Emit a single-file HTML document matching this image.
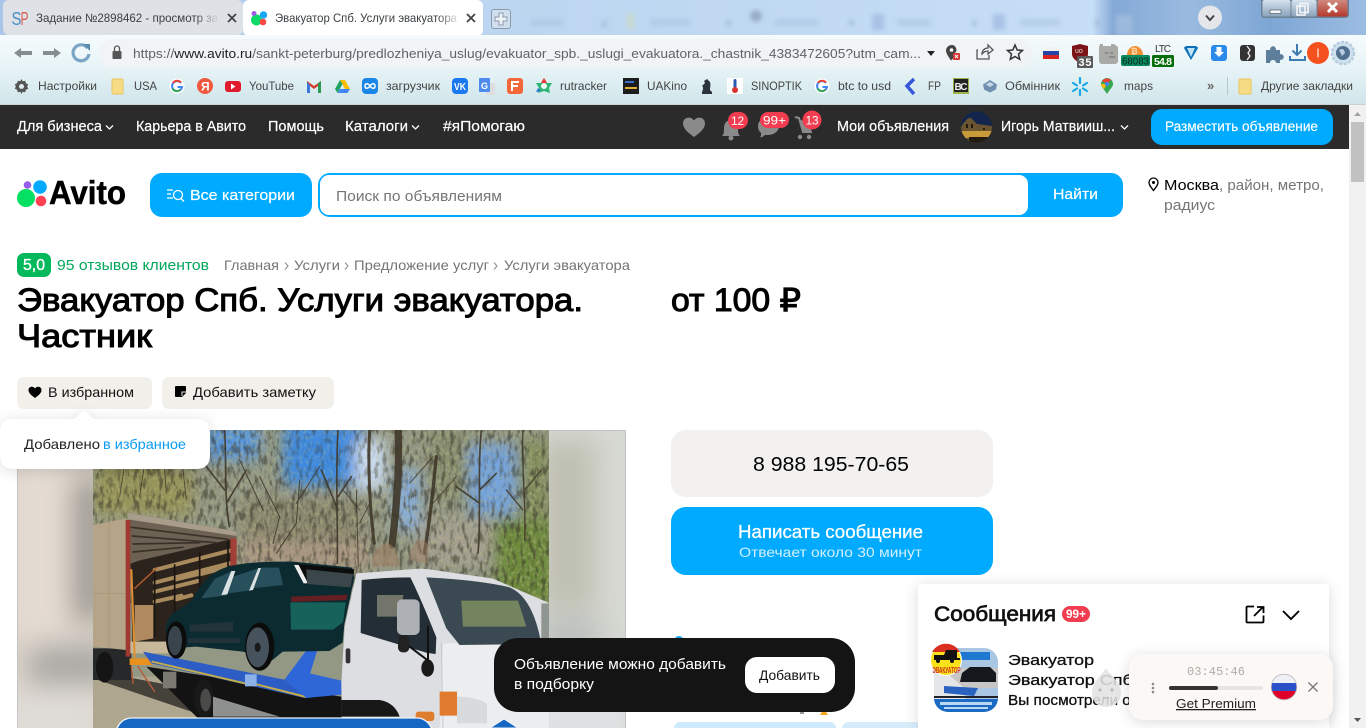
<!DOCTYPE html>
<html lang="ru"><head><meta charset="utf-8"><title>Эвакуатор Спб. Услуги эвакуатора</title>
<style>
html,body{margin:0;padding:0;width:1366px;height:728px;overflow:hidden;background:#fff}
svg{display:block;position:absolute;left:0;top:0}
text{font-family:"Liberation Sans","DejaVu Sans",sans-serif;white-space:pre}
.b{font-size:12px;fill:#444}
.n{font-size:14.5px;fill:#fff;stroke:#fff;stroke-width:.2}
.g{fill:#757575}
.h{fill:#000;stroke:#000;stroke-width:1;font-size:32px}
</style></head><body>
<svg width="1366" height="728" viewBox="0 0 1366 728" xmlns="http://www.w3.org/2000/svg">
<defs>
<linearGradient id="tool" x1="0" y1="0" x2="0" y2="1"><stop offset="0" stop-color="#f6fbfc"/><stop offset=".5" stop-color="#e6f3f6"/><stop offset="1" stop-color="#cfe5ea"/></linearGradient>
<linearGradient id="strip" x1="0" y1="0" x2="1" y2="0"><stop offset="0" stop-color="#a9c6e8"/><stop offset=".36" stop-color="#bcd5f0"/><stop offset=".8" stop-color="#c6def6"/><stop offset=".815" stop-color="#84a9d6"/><stop offset=".87" stop-color="#9abbe0"/><stop offset=".93" stop-color="#7ea6d4"/><stop offset="1" stop-color="#9cbde2"/></linearGradient>
<linearGradient id="f1" x1="0" x2="1"><stop offset="0" stop-color="#dee1e6" stop-opacity="0"/><stop offset="1" stop-color="#dee1e6"/></linearGradient>
<linearGradient id="f2" x1="0" x2="1"><stop offset="0" stop-color="#fff" stop-opacity="0"/><stop offset="1" stop-color="#fff"/></linearGradient>
<linearGradient id="ctl" x1="0" y1="0" x2="0" y2="1"><stop offset="0" stop-color="#d6e2ee"/><stop offset="1" stop-color="#8ba3bb"/></linearGradient>
<linearGradient id="red" x1="0" y1="0" x2="0" y2="1"><stop offset="0" stop-color="#d08a80"/><stop offset="1" stop-color="#b5382c"/></linearGradient>
<filter id="bl2"><feGaussianBlur stdDeviation="2.500"/></filter>
<filter id="bl6" x="-30%" y="-30%" width="160%" height="160%"><feGaussianBlur stdDeviation="7"/></filter>
<filter id="bl14" x="-30%" y="-30%" width="160%" height="160%"><feGaussianBlur stdDeviation="13"/></filter>
<filter id="sh" x="-20%" y="-30%" width="140%" height="170%"><feDropShadow dx="0" dy="2" stdDeviation="7" flood-color="#000" flood-opacity=".14"/></filter>
<filter id="noiseD" x="0" y="0" width="100%" height="100%" color-interpolation-filters="sRGB"><feTurbulence type="fractalNoise" baseFrequency=".24 .09" numOctaves="3" seed="8"/><feColorMatrix values="0 0 0 0 .22  0 0 0 0 .21  0 0 0 0 .16  4 0 0 0 -1.900"/></filter>
<filter id="noiseL" x="0" y="0" width="100%" height="100%" color-interpolation-filters="sRGB"><feTurbulence type="fractalNoise" baseFrequency=".3 .25" numOctaves="3" seed="21"/><feColorMatrix values="0 0 0 0 .72  0 0 0 0 .72  0 0 0 0 .52  0 5 0 0 -2.500"/></filter>
<clipPath id="photo"><rect x="93" y="430" width="456" height="298"/></clipPath>
<clipPath id="box"><rect x="18" y="430" width="607" height="298"/></clipPath>
<clipPath id="av"><ellipse cx="976.500" cy="127" rx="15.500" ry="15.500"/></clipPath>
<clipPath id="thumb"><rect x="934" y="648" width="64" height="64" rx="14"/></clipPath>
<clipPath id="flagc"><circle cx="1284" cy="687" r="12.500"/></clipPath>
</defs>

<!-- tab strip -->
<rect width="1366" height="36" fill="url(#strip)"/>
<g filter="url(#bl2)" opacity=".5">
<rect x="530" y="19" width="34" height="7" fill="#a5bfdb"/><rect x="602" y="21" width="5" height="6" fill="#8da7c3"/>
<rect x="627" y="13" width="7" height="16" fill="#cddca8"/><rect x="650" y="19" width="40" height="7" fill="#a5bfdb"/><rect x="726" y="20" width="5" height="6" fill="#8da7c3"/>
<circle cx="756" cy="16" r="6" fill="#6f829b"/><rect x="775" y="19" width="44" height="7" fill="#a5bfdb"/><rect x="849" y="20" width="5" height="6" fill="#8da7c3"/>
<rect x="872" y="14" width="12" height="16" fill="#8fa8d8"/><rect x="897" y="19" width="34" height="7" fill="#a5bfdb"/><rect x="972" y="20" width="5" height="6" fill="#8da7c3"/>
<rect x="993" y="14" width="12" height="16" fill="#8fa8d8"/><rect x="1020" y="19" width="40" height="7" fill="#a5bfdb"/><rect x="1095" y="20" width="5" height="6" fill="#8da7c3"/>
<rect x="1116" y="15" width="16" height="20" fill="#b3c9e1"/>
</g>
<rect x="3" y="0" width="240" height="35" rx="6" fill="#dee1e6"/>
<rect x="243" y="0" width="240" height="36" rx="6" fill="#fff"/>
<text x="11.500" y="25" font-size="18" fill="#4a90c6" textLength="10" lengthAdjust="spacingAndGlyphs">S</text><text x="20.500" y="25" font-size="18" fill="#d9604f" textLength="8" lengthAdjust="spacingAndGlyphs">P</text>
<text x="36" y="22" font-size="12" fill="#3c4043" textLength="182" lengthAdjust="spacingAndGlyphs">Задание №2898462 - просмотр за</text>
<rect x="195" y="6" width="24" height="26" fill="url(#f1)"/>
<path d="M228 14l8 8m0-8l-8 8" stroke="#444" stroke-width="1.800"/>
<circle cx="256.500" cy="20" r="5.500" fill="#0bd96a"/><circle cx="263.500" cy="15" r="3.700" fill="#1aa7f5"/><circle cx="254" cy="13.500" r="2.500" fill="#9b5de5"/><circle cx="263" cy="22" r="3.300" fill="#f44"/>
<text x="275" y="22" font-size="12" fill="#3c4043" textLength="182" lengthAdjust="spacingAndGlyphs">Эвакуатор Спб. Услуги эвакуатора</text>
<rect x="437" y="6" width="24" height="26" fill="url(#f2)"/>
<path d="M467 14l8 8m0-8l-8 8" stroke="#444" stroke-width="1.800"/>
<rect x="491.500" y="9.500" width="19" height="19" rx="2.500" fill="#cfdff0" stroke="#8b99a8"/>
<path d="M499 13h4v4h4v4h-4v4h-4v-4h-4v-4h4z" fill="#eef3f8" stroke="#8d9aa8"/>
<circle cx="1210" cy="17.500" r="12" fill="#e4e6ea"/><path d="M1206 15.500l4 4.500 4-4.500" fill="none" stroke="#444" stroke-width="2"/>
<!-- window controls -->
<path d="M1261 0v14q0 4 4 4h80q4 0 4-4V0z" fill="#6b7f94"/>
<rect x="1262.500" y="0" width="28" height="16.500" rx="2" fill="url(#ctl)"/>
<rect x="1291.500" y="0" width="25" height="16.500" rx="2" fill="url(#ctl)"/>
<rect x="1317.500" y="0" width="30" height="16.500" rx="2" fill="url(#red)"/>
<rect x="1270" y="10" width="11" height="3.500" fill="#f4f6f8" stroke="#3b4a58" stroke-width=".6"/>
<rect x="1297" y="6" width="8" height="9" fill="none" stroke="#f4f6f8" stroke-width="1.600"/><rect x="1300" y="3.500" width="8" height="9" fill="none" stroke="#f4f6f8" stroke-width="1.600"/>
<path d="M1328 3l9 9m0-9l-9 9" stroke="#fff" stroke-width="3"/>

<!-- toolbar -->
<rect y="35" width="1366" height="70" fill="url(#tool)"/>
<path d="M14 53l7-5v3h11v4H21v3z" fill="#868d90"/>
<path d="M61 53l-7-5v3H43v4h11v3z" fill="#868d90"/>
<path d="M87.500 48a8 8 0 1 0 1.500 6" fill="none" stroke="#7ba5c6" stroke-width="3.200"/><path d="M83 44h7v7z" fill="#5b8bb1"/>
<rect x="99" y="39" width="934" height="29" rx="14.500" fill="#f1f4f6"/>
<rect x="112.500" y="51" width="9" height="8" rx="1" fill="#555"/><path d="M114.500 51v-2.500a2.500 2.500 0 0 1 5 0V51" fill="none" stroke="#555" stroke-width="1.300"/>
<text x="133" y="58" font-size="13" fill="#5f6368" textLength="788" lengthAdjust="spacingAndGlyphs"><tspan>https://</tspan><tspan fill="#202124">www.avito.ru</tspan><tspan>/sankt-peterburg/predlozheniya_uslug/evakuator_spb._uslugi_evakuatora._chastnik_4383472605?utm_cam...</tspan></text>
<path d="M927 51h8l-4 5z" fill="#222"/>
<path d="M952 45c-4 0-6 3-6 5.500 0 3 3 7 5 10l3-3v-4c1.500-1 2.500-2 2.500-3.500 0-2.500-2-5-4.500-5z" fill="#444"/><circle cx="951.500" cy="50" r="1.800" fill="#fff"/><rect x="953" y="53" width="7" height="7" rx="1" fill="#d63535"/><path d="M955 55l3 3m0-3l-3 3" stroke="#fff"/>
<path d="M978 50h-1v9h12v-4M982 54c0-4 3-6 6-6v-3l5 5-5 4v-3c-3 0-4 1-6 3z" fill="none" stroke="#555" stroke-width="1.300"/>
<path d="M1015 45l2.200 5 5.300.500-4 3.500 1.200 5.300-4.700-2.800-4.700 2.800 1.200-5.300-4-3.500 5.300-.500z" fill="none" stroke="#333" stroke-width="1.500"/>
<!-- extensions -->
<rect x="1043" y="47" width="16" height="4" fill="#f2f2f2"/><rect x="1043" y="51" width="16" height="4" fill="#2743a8"/><rect x="1043" y="55" width="16" height="4" fill="#d8241f"/>
<path d="M1072 46l8-2 8 2v8c0 4-4 7-8 9-4-2-8-5-8-9z" fill="#7b1416"/><text x="1075" y="53" font-size="7" fill="#e8d8d8">uo</text>
<rect x="1077" y="56" width="16" height="12" rx="1" fill="#5a5a5a"/><text x="1078.500" y="66" font-size="11" font-weight="bold" fill="#fff" textLength="13">35</text>
<path d="M1100 44h3v2h8v-2h3l4 3v15l-2 2h-15l-2-2V47z" fill="#aaaaa6"/><path d="M1105 53h3m2 0h3m-4 4h6" stroke="#777" stroke-width="1.200"/>
<path d="M1127 55a8 9 0 0 1 16 0z" fill="#f09035"/><text x="1131" y="54" font-size="8" font-weight="bold" fill="#ffe0b8">₿</text>
<rect x="1121" y="55" width="29" height="11" rx="2" fill="#0a8a5e"/><text x="1122" y="64.500" font-size="10.500" fill="#0c2a1e" textLength="27" lengthAdjust="spacingAndGlyphs">68083</text>
<text x="1155" y="52" font-size="10" fill="#333" textLength="16">LTC</text>
<rect x="1152" y="55" width="22" height="12" rx="1.500" fill="#056e0a"/><text x="1154" y="65" font-size="10.500" font-weight="bold" fill="#fff" textLength="18">54.8</text>
<path d="M1184 48q1-2 3-2h8q2 0 3 2l-7 12z" fill="#0d6fb8"/><path d="M1187 48l4 9 4-9z" fill="#bfe4f7"/>
<rect x="1211" y="45" width="16" height="16" rx="3" fill="#2a8bea"/><path d="M1216.500 47h5v5h2.500l-5 5-5-5h2.500z" fill="#fff"/>
<rect x="1240" y="45" width="15" height="16" rx="3" fill="#333"/><path d="M1247 46l3 4-2 3 2 3-3 4" fill="none" stroke="#eee" stroke-width="1.300"/>
<path d="M1266 50h4c0-5 6-5 6 0h4v4c5 0 5 6 0 6v3h-4c0-4-6-4-6 0h-4z" fill="#5e7f9b"/>
<path d="M1297 44v11m-4.500-4.500l4.500 4.500 4.500-4.500" fill="none" stroke="#3c7cb3" stroke-width="2"/><path d="M1290 56v4h15v-4" fill="none" stroke="#3c7cb3" stroke-width="2"/>
<circle cx="1318" cy="53" r="11" fill="#f4511e"/><rect x="1317.300" y="48.500" width="1.400" height="9" fill="#f5d9cc"/>
<circle cx="1343" cy="53" r="11" fill="#cfe0ee" stroke="#b7cde0" stroke-width="2.500" stroke-dasharray="3 1.500"/><circle cx="1343" cy="53" r="7" fill="#51708f"/><path d="M1339 50q3-2 5 0l1 3-3 3z" fill="#b9cde0"/>

<!-- bookmarks -->
<path d="M21.500 79l1.200 2.200 2.500-.5.700 2.500 2.300 1-1 2.300 1 2.300-2.300 1-.700 2.500-2.500-.5-1.200 2.200-1.200-2.200-2.500.5-.7-2.500-2.300-1 1-2.300-1-2.300 2.300-1 .7-2.500 2.500.5z" fill="#555"/><circle cx="21.500" cy="86.500" r="2.500" fill="#dcecf0"/>
<text class="b" x="38" y="90" textLength="59" lengthAdjust="spacingAndGlyphs">Настройки</text>
<rect x="112" y="79" width="11" height="15" rx="1" fill="#f8dc85" stroke="#e8c65e"/>
<text class="b" x="134" y="90" textLength="23" lengthAdjust="spacingAndGlyphs">USA</text>
<circle cx="177" cy="86" r="7.500" fill="#fff"/><path d="M181 83a5 5 0 1 0 1 4h-4.500" fill="none" stroke="#4285f4" stroke-width="2"/><path d="M173 83a5 5 0 0 1 8-.5" fill="none" stroke="#ea4335" stroke-width="2"/><path d="M172.500 88.500a5 5 0 0 0 8 1" fill="none" stroke="#34a853" stroke-width="2"/>
<circle cx="205" cy="86" r="8" fill="#f2583e"/><text x="201" y="90.500" font-size="12" font-weight="bold" fill="#fff">Я</text>
<rect x="225" y="81" width="16" height="11" rx="3" fill="#e21b2c"/><path d="M231 83.500l4.500 3-4.500 3z" fill="#fff"/>
<text class="b" x="249" y="90" textLength="45" lengthAdjust="spacingAndGlyphs">YouTube</text>
<path d="M307 81v12h3v-7l4 3 4-3v7h3V81l-7 5z" fill="#d33b2c"/><path d="M318 93h3V81l-3 2z" fill="#2d9a52"/><path d="M307 93h3v-8l-3-3z" fill="#3a79d8"/>
<path d="M340 80h5l5 9h-5z" fill="#fbbc04"/><path d="M340 80l-5 9 2.500 4 5-9z" fill="#1fa463"/><path d="M337.500 93h10l2.500-4h-10z" fill="#4285f4"/>
<rect x="362" y="78" width="16" height="16" rx="4" fill="#1a86e8"/><path d="M370 86c-2-3-5-3-5 0s3 3 5 0 5-3 5 0-3 3-5 0z" fill="none" stroke="#fff" stroke-width="1.500"/>
<text class="b" x="386" y="90" textLength="54" lengthAdjust="spacingAndGlyphs">загрузчик</text>
<rect x="452" y="78" width="16" height="16" rx="4" fill="#1a78f0"/><text x="454" y="90" font-size="10" font-weight="bold" fill="#fff" textLength="12" lengthAdjust="spacingAndGlyphs">VK</text>
<rect x="486" y="83" width="9" height="12" fill="#ddd"/><rect x="479" y="78" width="11" height="14" rx="1" fill="#4d8ced"/><text x="481" y="89" font-size="9" font-weight="bold" fill="#fff">G</text>
<rect x="507" y="78" width="16" height="16" rx="3" fill="#f4673a"/><path d="M512 91V82h7m-7 4h6" fill="none" stroke="#fff" stroke-width="2"/>
<path d="M544 78l3 5h5l-3 5 1 5-6-2-6 2 1-5-3-5h5z" fill="#2bb673"/><path d="M544 78l3 5h-6z" fill="#e33"/><circle cx="544" cy="86" r="3" fill="#f3f8f8"/><path d="M538 88l-2 4 5-1z" fill="#2a74d6"/>
<text class="b" x="560" y="90" textLength="47" lengthAdjust="spacingAndGlyphs">rutracker</text>
<rect x="623" y="78" width="16" height="16" fill="#1c1c1c"/><rect x="625" y="81" width="9" height="2" fill="#3a6fd0"/><rect x="625" y="87" width="12" height="2" fill="#e0b030"/>
<text class="b" x="647" y="90" textLength="40" lengthAdjust="spacingAndGlyphs">UAKino</text>
<path d="M702 94h10v-2l-2-2c0-3 1-5 0-8l-3-3-3 2 1 2-3 3 1 1c0 2 0 3-1 5z" fill="#2b333d"/>
<rect x="727" y="78" width="16" height="16" rx="1" fill="#fff"/><rect x="733.500" y="79" width="3" height="10" rx="1.500" fill="#2d5db3"/><circle cx="735" cy="90" r="3" fill="#d8342c"/>
<text class="b" x="751" y="90" textLength="51" lengthAdjust="spacingAndGlyphs">SINOPTIK</text>
<circle cx="822" cy="86" r="7.500" fill="#fff"/><path d="M826 83a5 5 0 1 0 1 4h-4.500" fill="none" stroke="#4285f4" stroke-width="2"/><path d="M818 83a5 5 0 0 1 8-.5" fill="none" stroke="#ea4335" stroke-width="2"/><path d="M817.500 88.500a5 5 0 0 0 8 1" fill="none" stroke="#34a853" stroke-width="2"/>
<text class="b" x="838" y="90" textLength="53" lengthAdjust="spacingAndGlyphs">btc to usd</text>
<path d="M914 79l-7 7 7 8" fill="none" stroke="#3557d8" stroke-width="3.500"/>
<text class="b" x="928" y="90" textLength="13" lengthAdjust="spacingAndGlyphs">FP</text>
<rect x="953" y="78" width="16" height="16" fill="#9db24a"/><rect x="954" y="79" width="14" height="13" fill="#222"/><text x="954.500" y="90" font-size="10" font-weight="bold" fill="#eee" textLength="13">BC</text>
<path d="M990 80l7 4.500-1 5-6 3-6-3-1-5z" fill="#6f8fb1"/><path d="M990 82l4 2.500-4 2.500-4-2.500z" fill="#c7d6e6"/>
<text class="b" x="1005" y="90" textLength="55" lengthAdjust="spacingAndGlyphs">Обмінник</text>
<path d="M1080 78v5m0 7v5m-7-12l4 2.500m6 3l4 2.500m-14 0l4-2.500m6-3l4-2.500" stroke="#18a8e8" stroke-width="2.200" stroke-linecap="round"/>
<path d="M1107 94c-3-5-6-7-6-10a6 6 0 0 1 12 0c0 3-3 5-6 10z" fill="#34a853"/><path d="M1102 81l5 3 4-4a6 6 0 0 0-9 1z" fill="#ea4335"/><path d="M1101 84c0 2 2 4 3 5l3-5z" fill="#fbbc04"/><circle cx="1107" cy="84" r="2.200" fill="#4285f4"/>
<text class="b" x="1124" y="90" textLength="29" lengthAdjust="spacingAndGlyphs">maps</text>
<text x="1207" y="90" font-size="13" font-weight="bold" fill="#666">»</text>
<rect x="1227" y="77" width="1" height="18" fill="#b9c6c9"/>
<rect x="1239" y="79" width="12" height="15" rx="1" fill="#f8dc85" stroke="#e8c65e"/>
<text class="b" x="1261" y="90" textLength="92" lengthAdjust="spacingAndGlyphs">Другие закладки</text>
<rect y="104" width="1366" height="1" fill="#c9d3d6"/>

<!-- page header -->
<rect y="105" width="1349" height="44" fill="#2b2b2b"/>
<text class="n" x="17" y="131" textLength="85" lengthAdjust="spacingAndGlyphs">Для бизнеса</text><path d="M106 125.500l3.500 3.500 3.500-3.500" fill="none" stroke="#fff" stroke-width="1.300"/>
<text class="n" x="136" y="131" textLength="110" lengthAdjust="spacingAndGlyphs">Карьера в Авито</text>
<text class="n" x="268" y="131" textLength="56" lengthAdjust="spacingAndGlyphs">Помощь</text>
<text class="n" x="345" y="131" textLength="63" lengthAdjust="spacingAndGlyphs">Каталоги</text><path d="M412 125.500l3.500 3.500 3.500-3.500" fill="none" stroke="#fff" stroke-width="1.300"/>
<text class="n" x="443" y="131" textLength="82" lengthAdjust="spacingAndGlyphs">#яПомогаю</text>
<path d="M694 137c-7-5-11-9-11-13.500 0-6 7.500-8 11-3 3.500-5 11-3 11 3 0 4.500-4 8.500-11 13.500z" fill="#8a8a8a"/>
<path d="M722 136c2-2 2-4 2-8 0-5 3-8 7-8s7 3 7 8c0 4 0 6 2 8z" fill="#8a8a8a"/><circle cx="731" cy="138" r="2.500" fill="#8a8a8a"/>
<rect x="728" y="112" width="20" height="17" rx="8.500" fill="#f23c50"/><text x="731" y="125" font-size="12" fill="#fff" textLength="13">12</text>
<path d="M758 126a10.500 9 0 0 1 21 0c0 6-6 9-11 9-1 0-2 0-3-.3-1 1.500-3 2.500-5 2.800 1-1.500 1.300-3 1-4.500-2-1.700-3-4-3-7z" fill="#8a8a8a"/>
<rect x="760" y="112" width="29" height="16" rx="8" fill="#f23c50"/><text x="763" y="124.500" font-size="12" fill="#fff" textLength="23" lengthAdjust="spacingAndGlyphs">99+</text>
<path d="M795 117l4 1 4 14h9" fill="none" stroke="#8a8a8a" stroke-width="2"/><path d="M800 120l12 2-1 9h-8z" fill="#8a8a8a"/><circle cx="800" cy="137" r="2.200" fill="#8a8a8a"/><circle cx="809" cy="137" r="2.200" fill="#8a8a8a"/>
<circle cx="812" cy="120" r="9.500" fill="#f23c50"/><text x="805.500" y="124.500" font-size="12" fill="#fff" textLength="13">13</text>
<text class="n" x="837" y="131" textLength="112" lengthAdjust="spacingAndGlyphs">Мои объявления</text>
<g clip-path="url(#av)"><rect x="961" y="111" width="31" height="32" fill="#12254d"/><path d="M961 127q6-10 10-9l6 6 15 2v17h-31z" fill="#6b5430"/><path d="M961 131h31v7h-31z" fill="#c99a3a"/><path d="M966 124h2v4h-2zm5 0h2v4h-2zm12 4h2v2h-2zm-14 9h22v6h-22z" fill="#231a10"/></g>
<text class="n" x="1001" y="131" textLength="114" lengthAdjust="spacingAndGlyphs">Игорь Матвииш...</text><path d="M1121 125.500l3.500 3.500 3.500-3.500" fill="none" stroke="#fff" stroke-width="1.300"/>
<rect x="1151" y="109" width="182" height="36" rx="11" fill="#00aaff"/>
<text x="1165" y="131" font-size="13.500" fill="#fff" stroke="#fff" stroke-width=".15" textLength="153" lengthAdjust="spacingAndGlyphs">Разместить объявление</text>

<!-- scrollbar -->
<rect x="1349" y="105" width="17" height="623" fill="#f1f1f1"/>
<rect x="1351" y="122" width="13" height="60" fill="#c1c1c1"/>
<path d="M1354 116l3.500-4 3.500 4z" fill="#a3a3a3"/><path d="M1354 718l3.500 4 3.500-4z" fill="#555"/>

<!-- logo and search -->
<circle cx="26" cy="198" r="9" fill="#04e061"/><circle cx="40" cy="187" r="6.800" fill="#00aaff"/><circle cx="27.500" cy="185" r="3.800" fill="#965eeb"/><circle cx="41" cy="201" r="5.300" fill="#ff4053"/>
<text x="49" y="204" font-size="33" font-weight="bold" fill="#000" stroke="#000" stroke-width=".5" textLength="77" lengthAdjust="spacingAndGlyphs">Avito</text>
<rect x="150" y="173" width="162" height="44" rx="12" fill="#00aaff"/>
<path d="M167 190h6m-6 4h4m-4 4h6" stroke="#fff" stroke-width="1.200"/><circle cx="178" cy="195" r="4.500" fill="none" stroke="#fff" stroke-width="1.300"/><path d="M181 198.500l3 3" stroke="#fff" stroke-width="1.300"/>
<text x="190" y="200" font-size="15" fill="#fff" stroke="#fff" stroke-width=".2" textLength="105" lengthAdjust="spacingAndGlyphs">Все категории</text>
<rect x="318" y="173" width="805" height="44" rx="12" fill="#00aaff"/>
<rect x="320" y="175" width="708" height="40" rx="9" fill="#fff"/>
<text x="336" y="201" font-size="15" fill="#757575" textLength="166" lengthAdjust="spacingAndGlyphs">Поиск по объявлениям</text>
<text x="1053" y="199" font-size="15" fill="#fff" stroke="#fff" stroke-width=".2" textLength="45" lengthAdjust="spacingAndGlyphs">Найти</text>
<path d="M1153.500 190.500c-3-4-4.500-5.500-4.500-8a4.500 4.500 0 0 1 9 0c0 2.500-1.500 4-4.500 8z" fill="none" stroke="#000" stroke-width="1.300"/><circle cx="1153.500" cy="182.500" r="1.500" fill="#000"/>
<text x="1164" y="190" font-size="15" fill="#000" textLength="55" lengthAdjust="spacingAndGlyphs">Москва</text>
<text x="1219" y="190" font-size="15" class="g" textLength="105" lengthAdjust="spacingAndGlyphs">, район, метро,</text>
<text x="1164" y="210" font-size="15" class="g" textLength="51" lengthAdjust="spacingAndGlyphs">радиус</text>

<!-- rating / breadcrumbs -->
<rect x="17" y="253" width="34" height="24" rx="7" fill="#04b85c"/>
<text x="23" y="270" font-size="15.500" fill="#fff" stroke="#fff" stroke-width=".35" textLength="22" lengthAdjust="spacingAndGlyphs">5,0</text>
<text x="57" y="270" font-size="14.500" fill="#00a65a" textLength="152" lengthAdjust="spacingAndGlyphs">95 отзывов клиентов</text>
<text x="224" y="270" font-size="14" class="g" textLength="55" lengthAdjust="spacingAndGlyphs">Главная</text>
<path d="M285 262.500l3 3.500-3 3.500" fill="none" stroke="#8a8a8a"/>
<text x="294" y="270" font-size="14" class="g" textLength="46" lengthAdjust="spacingAndGlyphs">Услуги</text>
<path d="M345 262.500l3 3.500-3 3.500" fill="none" stroke="#8a8a8a"/>
<text x="354" y="270" font-size="14" class="g" textLength="135" lengthAdjust="spacingAndGlyphs">Предложение услуг</text>
<path d="M494 262.500l3 3.500-3 3.500" fill="none" stroke="#8a8a8a"/>
<text x="504" y="270" font-size="14" class="g" textLength="126" lengthAdjust="spacingAndGlyphs">Услуги эвакуатора</text>

<!-- title -->
<text class="h" x="17" y="311" textLength="566" lengthAdjust="spacingAndGlyphs">Эвакуатор Спб. Услуги эвакуатора.</text>
<text class="h" x="17" y="347" textLength="135" lengthAdjust="spacingAndGlyphs">Частник</text>
<text class="h" x="671" y="311" textLength="130" lengthAdjust="spacingAndGlyphs">от 100 ₽</text>

<!-- fav buttons -->
<rect x="17" y="377" width="135" height="32" rx="7" fill="#f2f0eb"/>
<path d="M35 398c-4-3-6.500-5-6.500-8 0-3.500 4.500-4.500 6.500-1.500 2-3 6.500-2 6.500 1.500 0 3-2.500 5-6.500 8z" fill="#000"/>
<text x="48" y="397" font-size="14" fill="#111" textLength="86" lengthAdjust="spacingAndGlyphs">В избранном</text>
<rect x="162" y="377" width="172" height="32" rx="7" fill="#f2f0eb"/>
<path d="M175 387q0-1 1-1h9q1 0 1 1v6l-4 4h-6q-1 0-1-1z" fill="#000"/><path d="M186 392h-4v4" fill="none" stroke="#f2f0eb"/>
<text x="193" y="397" font-size="14" fill="#111" textLength="123" lengthAdjust="spacingAndGlyphs">Добавить заметку</text>

<!-- image box -->
<rect x="17" y="430" width="609" height="298" fill="#d2d2cc"/>
<g clip-path="url(#box)">
<rect x="18" y="430" width="76" height="298" fill="#dcd3ca"/>
<rect x="545" y="430" width="80" height="298" fill="#d6d8d2"/>
<g filter="url(#bl14)">
<rect x="72" y="480" width="34" height="140" fill="#a09c94"/>
<rect x="30" y="645" width="80" height="40" fill="#aaaaa6"/>
<rect x="0" y="695" width="100" height="50" fill="#dfdcd8"/>
<rect x="15" y="420" width="50" height="220" fill="#e4dbd2"/>
<rect x="540" y="440" width="55" height="170" fill="#c0c1b3"/>
<rect x="540" y="620" width="60" height="30" fill="#b8bcba"/>
<rect x="530" y="670" width="100" height="70" fill="#e0e3e5"/>
</g>
</g>
<rect x="17.500" y="430.500" width="608" height="298" fill="none" stroke="#c3c3c3"/>

<!-- photo -->
<g clip-path="url(#photo)">
<rect x="93" y="430" width="456" height="298" fill="#939885"/>
<g filter="url(#bl6)">
<rect x="285" y="425" width="80" height="60" fill="#3f8be0"/>
<rect x="205" y="425" width="55" height="35" fill="#5a98de"/>
<rect x="355" y="440" width="30" height="50" fill="#c4d8f0"/>
<rect x="395" y="470" width="25" height="60" fill="#88aedc"/>
<rect x="470" y="445" width="45" height="70" fill="#76a4dc"/>
<rect x="93" y="470" width="100" height="45" fill="#96945a"/>
<rect x="240" y="500" width="120" height="50" fill="#8a8870"/>
<rect x="240" y="540" width="130" height="30" fill="#a89582"/>
<rect x="420" y="520" width="70" height="45" fill="#a5a092"/>
<rect x="495" y="520" width="60" height="85" fill="#6d8a3e"/>
<rect x="430" y="430" width="40" height="70" fill="#8a9072"/>
<rect x="100" y="430" width="70" height="40" fill="#808a56"/>
<rect x="520" y="440" width="30" height="80" fill="#838f5e"/>
</g>
<rect x="93" y="430" width="456" height="175" filter="url(#noiseL)" opacity=".4"/>
<rect x="93" y="430" width="456" height="175" filter="url(#noiseD)" opacity=".55"/>
<g filter="url(#bl6)" opacity=".4">
<rect x="285" y="430" width="70" height="50" fill="#3f8be0"/>
<rect x="472" y="450" width="40" height="55" fill="#76a4dc"/>
<rect x="355" y="442" width="28" height="40" fill="#d6e4f4"/>
</g>
<g transform="translate(93 470) scale(.33333)" fill="none" stroke-linecap="round">
<!-- trunks and branches -->
<g stroke="#40382a" opacity=".9">
<path d="M830-120c-6 100 0 240 14 340" stroke-width="9"/>
<path d="M915-120c6 120-5 240-18 345" stroke-width="22"/>
<path d="M1030-40c-10 100-20 200-36 290" stroke-width="10"/>
<path d="M735-120c-8 130 0 280-2 400M735 120l-50-120M735 80l40-60" stroke-width="5"/>
<path d="M1165-120c-12 130 0 260-10 370M1160 100l-70-50M1160 60l50-50" stroke-width="5"/>
<path d="M395-120c6 100-2 200 14 290M395 60l-70-90M400 100l60-100" stroke-width="5"/>
<path d="M1290-120c-6 100 10 220 5 330M1295 60l50-60M1290 120l-50-60" stroke-width="4"/>
<path d="M620 30l-10 130-60 90M500 20l60 120-20 80M440-30l70 150M610 100l70-110" stroke-width="3"/>
<path d="M790 60l6 230M800 120l-50-60M800 160l30-60M170-120l-30 200M210-60l10 130M100-50l-20 130M260-90l20 180M950 40l70-80M1090 20l-70 80" stroke-width="2.500"/>
</g>
<!-- pink foliage -->
<path d="M840 290c-10-40 20-70 40-70s40 30 40 70z" fill="#a08068" stroke="none" opacity=".6"/>
<path d="M950 270c-5-30 20-70 40-60s20 40 10 70z" fill="#a08068" stroke="none" opacity=".5"/>
<!-- ground -->
<path d="M0 620H320V774H0z" fill="#aea68e" stroke="none"/>
<path d="M0 625l310 105v-70L40 610z" fill="#45423a" stroke="none"/>
<!-- rear chassis -->
<rect x="0" y="535" width="115" height="95" fill="#26282a" stroke="none"/>
<ellipse cx="35" cy="592" rx="26" ry="46" fill="#141414" stroke="none"/>
<!-- truck box -->
<path d="M0 165l100-20v395l-100-10z" fill="#b5a487" stroke="none"/>
<path d="M48 155v380M0 370h100" stroke="#a39274" stroke-width="2"/>
<path d="M112 260l303-55v310H118z" fill="#2c241c" stroke="none"/>
<path d="M108 128l322 56v20l-292 68-28 10z" fill="#6c6152" stroke="none"/>
<path d="M105 128l325 56v14L105 148z" fill="#a89d8a" stroke="none"/>
<path d="M115 172l290 36M118 198l250 20M120 222l200-4M120 246l150-14" stroke="#3a3228" stroke-width="5"/>
<path d="M185 300l225-58M185 338l225-58M185 395l80-18M185 365l130-32M250 328l66-16M325 312l75-20M250 388l45-12" stroke="#a88a5c" stroke-width="12"/>
<path d="M245 285v230M320 250v160M185 300v200M405 215v80" stroke="#1a1510" stroke-width="5"/>
<path d="M125 405h56v100l-56 10z" fill="#b08a60" stroke="none"/>
<path d="M110 515h115v35H110z" fill="#c8b89a" stroke="none"/>
<path d="M98 150h14v410H98z" fill="#9e3a30" stroke="none"/>
<path d="M412 205h19v85h-19z" fill="#a04038" stroke="none"/>
<path d="M115 300l10 260" stroke="#e09030" stroke-width="6"/>
<path d="M125 355l65-60" stroke="#b8602c" stroke-width="4"/>
<!-- trays -->
<path d="M110 565h60l8 20H110z" fill="#e8911f" stroke="none"/>
<path d="M115 590l5 50M135 590l50 75" stroke="#b85a38" stroke-width="4"/>
<!-- chassis -->
<path d="M160 590l585 90v70H320l-130-130z" fill="#131313" stroke="none"/>
<rect x="210" y="605" width="40" height="50" fill="#7a7a72" stroke="none"/>
<ellipse cx="333" cy="685" rx="30" ry="56" fill="#191919" stroke="none"/><ellipse cx="338" cy="690" rx="16" ry="34" fill="#4a4a48" stroke="none"/>
<path d="M360 680l200 60H360z" fill="#8e9090" stroke="none"/>
<!-- flatbed -->
<path d="M150 545l430 85 60 10v45L175 580z" fill="#2c5cc4" stroke="none"/>
<path d="M178 575l277 65M490 643l150 38" stroke="#c2ad48" stroke-width="6"/>
<rect x="456" y="613" width="35" height="36" fill="#8db2e8" stroke="none"/>
<path d="M695 468L650 610l95 22v42l-105 10-65-55z" fill="#2f67d6" stroke="none"/>
<path d="M695 468l-120 160 65 20z" fill="#2e66d8" stroke="none"/>
<circle cx="690" cy="447" r="14" fill="#83796a" stroke="none"/>
<!-- car -->
<path d="M218 490c0-30 6-50 30-65l50-35c16-30 40-75 92-95 50-20 150-20 210-20l178 18 6 30-30 140-5 55-40 25-140 2-30 25-90-25-140-15-70 5z" fill="#0c2b30" stroke="none"/>
<path d="M325 385l40-58 50-23-15 72zM405 370l16-50 74-25-28 67zM478 355l28-62 52 0 12 52z" fill="#27505c" stroke="none"/>
<path d="M385 375l30-72 12 0-24 70zM468 362l28-68 8 0-24 66z" fill="#dbe2e4" stroke="none"/>
<path d="M612 282l172 16-2 14-140-14 5 45-12 0-18-50z" fill="#0c0c0c" stroke="none"/>
<path d="M603 285l14 0 28 55-13 0z" fill="#eee" stroke="none"/>
<path d="M640 298l140 14-8 40-130-10z" fill="#3a464a" stroke="none"/>
<path d="M595 380l170-6-6 16-164 6z" fill="#651f22" stroke="none"/>
<path d="M592 397l166 0-8 60-30 22-126 0z" fill="#17625a" stroke="none"/>
<path d="M285 505h155v14H285zM290 465l130-10v30H290z" fill="#22343a" stroke="none"/>
<ellipse cx="250" cy="510" rx="31" ry="56" fill="#0c0c0c" stroke="none"/><ellipse cx="246" cy="512" rx="21" ry="44" fill="#3a444c" stroke="none"/>
<ellipse cx="500" cy="530" rx="44" ry="72" fill="#0c0c0c" stroke="none"/><ellipse cx="494" cy="532" rx="34" ry="60" fill="#46525c" stroke="none"/><ellipse cx="494" cy="532" rx="9" ry="14" fill="#1a1a1a" stroke="none"/>
<!-- cab -->
<path d="M790 310l190-14 30 2 190 28 170 74v374H748l-3-135 10-170z" fill="#dcdee1" stroke="none"/>
<path d="M1050 520l320 0v254H1040z" fill="#ebedef" stroke="none"/>
<path d="M806 330q70-8 146-8 30 60 78 180l-2 50-25-3-200-60z" fill="#242e36" stroke="none"/>
<path d="M852 375h80l-20 65-60 0z" fill="#73756a" stroke="none"/>
<path d="M1000 322q160 8 250 30 70 30 95 170l-245 3-40-50z" fill="#3b4a52" stroke="none"/>
<path d="M1105 392h170l25 78h-190z" fill="#74845f" stroke="none"/>
<path d="M1345 400h25v125h-25z" fill="#8f9590" stroke="none"/>
<rect x="912" y="388" width="68" height="107" rx="16" fill="#adb1b6" stroke="none"/>
<rect x="915" y="495" width="34" height="52" rx="14" fill="#222" stroke="none"/>
<ellipse cx="1004" cy="594" rx="19" ry="26" fill="#1a1a1a" stroke="none"/>
<path d="M950 530l50 38M1005 470v100" stroke="#111" stroke-width="6"/>
<rect x="758" y="535" width="14" height="45" rx="6" fill="#333" stroke="none"/>
<path d="M1045 520l5 254" stroke="#c7cacd" stroke-width="3"/>
<path d="M745 690h115q45 8 60 50H745z" fill="#171717" stroke="none"/>
<path d="M1040 665h52v72h-52z" fill="#e07a2c" stroke="none"/>
<path d="M1092 680q50 0 90 20v60h-90z" fill="#d8dbde" stroke="none"/>
<rect x="968" y="725" width="56" height="28" rx="8" fill="#dd7d2d" stroke="none"/>
<!-- banner -->
<path d="M70 780q12-34 44-36h860q30 2 44 36z" fill="#1666c4" stroke="#eef2f6" stroke-width="4"/>
</g>
<path d="M490 728l14-9 14 9z" fill="#1666c4" stroke="#eef2f6"/>
</g>

<!-- tooltip -->
<g filter="url(#sh)"><path d="M14 419H75l9-9 9 9h103q14 0 14 14v22q0 14-14 14H14Q0 469 0 455V433q0-14 14-14z" fill="#fff"/></g>
<text x="24" y="449" font-size="14" fill="#222" textLength="76" lengthAdjust="spacingAndGlyphs">Добавлено</text>
<text x="103" y="449" font-size="14" fill="#0a9bf5" textLength="83" lengthAdjust="spacingAndGlyphs">в избранное</text>

<!-- contact column -->
<rect x="671" y="430" width="322" height="67" rx="15" fill="#f2f1f0"/>
<text x="753" y="471" font-size="20" fill="#000" textLength="156" lengthAdjust="spacingAndGlyphs">8 988 195-70-65</text>
<rect x="671" y="507" width="322" height="68" rx="15" fill="#00aaff"/>
<text x="738" y="538" font-size="18" fill="#fff" stroke="#fff" stroke-width=".3" textLength="185" lengthAdjust="spacingAndGlyphs">Написать сообщение</text>
<text x="739" y="557" font-size="14" fill="#d3efff" textLength="183" lengthAdjust="spacingAndGlyphs">Отвечает около 30 минут</text>
<circle cx="679" cy="641" r="5" fill="#17a5f5"/>
<rect x="674" y="722" width="162" height="14" rx="6" fill="#cfeafc"/><rect x="842" y="722" width="80" height="14" rx="6" fill="#d6ecfa"/>
<rect x="800" y="707" width="4" height="7" fill="#999"/><path d="M824 708l-4 7h8z" fill="#f5a623"/>

<!-- toast -->
<rect x="494" y="638" width="361" height="74" rx="24" fill="#141414"/>
<text x="514" y="669" font-size="14.500" fill="#fff" textLength="212" lengthAdjust="spacingAndGlyphs">Объявление можно добавить</text>
<text x="514" y="689" font-size="14.500" fill="#fff" textLength="80" lengthAdjust="spacingAndGlyphs">в подборку</text>
<rect x="745" y="657" width="90" height="36" rx="12" fill="#fff"/>
<text x="759" y="680" font-size="14" fill="#111" textLength="61" lengthAdjust="spacingAndGlyphs">Добавить</text>

<!-- messages panel -->
<g filter="url(#sh)"><path d="M922 584h403q4 0 4 4v140H918V588q0-4 4-4z" fill="#fff"/></g>
<text x="934" y="621" font-size="21" fill="#111" stroke="#111" stroke-width=".7" textLength="122" lengthAdjust="spacingAndGlyphs">Сообщения</text>
<rect x="1062" y="606" width="28" height="16" rx="8" fill="#f23c50"/><text x="1066" y="618" font-size="11.500" font-weight="bold" fill="#fff" textLength="20" lengthAdjust="spacingAndGlyphs">99+</text>
<path d="M1254 606.500h-6.500q-1 0-1 1v14q0 1 1 1h15q1 0 1-1v-6" fill="none" stroke="#000" stroke-width="1.800"/><path d="M1254 616l9-9m-6 0h6.500v6" fill="none" stroke="#000" stroke-width="1.800"/>
<path d="M1283 611l8 8 8-8" fill="none" stroke="#000" stroke-width="1.900"/>
<g clip-path="url(#thumb)">
<rect x="934" y="648" width="64" height="64" fill="#a9c6e2"/>
<rect x="960" y="652" width="30" height="8" fill="#1e78d2"/>
<path d="M934 668h64v20h-64z" fill="#c8c6c4"/>
<path d="M960 682l2-9 8-6h20l6 6v9z" fill="#14181c"/>
<path d="M934 672l14 2 14 12 4 14h-32z" fill="#e4e6e8"/>
<path d="M944 686l34 2-4 8-30-3z" fill="#2a62c0"/>
<path d="M934 696h64v2h-64z" fill="#20242a"/>
<rect x="934" y="699" width="64" height="13" fill="#1b6ac4"/>
<rect x="940" y="702" width="52" height="3" fill="#bcd7f2"/><rect x="944" y="707" width="44" height="2" fill="#bcd7f2"/>
</g>
<circle cx="946" cy="660" r="16" fill="#fff"/><circle cx="946" cy="660" r="15" fill="#fae21a"/>
<path d="M932 652a16 16 0 0 1 28 0z" fill="#d92e20"/><path d="M934 655h10l2-5h11v8h3v2h-26z" fill="#111"/><circle cx="938" cy="661" r="2" fill="#111"/><circle cx="952" cy="661" r="2" fill="#111"/>
<text x="932.500" y="673" font-size="8" font-weight="bold" fill="#cf2a1c" textLength="28" lengthAdjust="spacingAndGlyphs">ЭВАКУАТОР</text>
<text x="1008" y="665" font-size="15" fill="#111" stroke="#111" stroke-width=".3" textLength="86" lengthAdjust="spacingAndGlyphs">Эвакуатор</text>
<text x="1008" y="685" font-size="15" fill="#111" stroke="#111" stroke-width=".3" textLength="190" lengthAdjust="spacingAndGlyphs">Эвакуатор Спб. Услуги</text>
<text x="1008" y="705" font-size="15" fill="#111" stroke="#111" stroke-width=".3" textLength="200" lengthAdjust="spacingAndGlyphs">Вы посмотрели объявление</text>
<!-- vpn popup -->
<path d="M1106 668c-2 5-14 13-14 25 0 9 6 14 14 14s15-5 15-14c0-12-13-20-15-25z" fill="#e2e2e2" opacity=".88"/><circle cx="1100" cy="690" r="1.600" fill="#bbb"/><circle cx="1112" cy="690" r="1.600" fill="#bbb"/><path d="M1103 697q3 2.500 6 0" fill="none" stroke="#bbb"/>
<g filter="url(#sh)"><rect x="1129" y="654" width="204" height="66" rx="14" fill="#fbf8f5"/></g>
<text x="1187" y="675" style="font-family:'Liberation Mono',monospace" font-size="12" fill="#b1aca8" textLength="58">03:45:46</text>
<circle cx="1153" cy="684" r="1.300" fill="#888"/><circle cx="1153" cy="688" r="1.300" fill="#888"/><circle cx="1153" cy="692" r="1.300" fill="#888"/>
<rect x="1169" y="686" width="94" height="4" rx="2" fill="#e8e6e4"/><rect x="1169" y="686" width="49" height="4" rx="2" fill="#333"/>
<text x="1176" y="708" font-size="13" fill="#222" textLength="80" lengthAdjust="spacingAndGlyphs" text-decoration="underline">Get Premium</text>
<g clip-path="url(#flagc)"><rect x="1271" y="674" width="26" height="9" fill="#eef0f4"/><rect x="1271" y="683" width="26" height="8" fill="#2b50c8"/><rect x="1271" y="691" width="26" height="9" fill="#e0002a"/></g><circle cx="1284" cy="687" r="12.800" fill="none" stroke="#b9b9b9" stroke-width=".8"/>
<path d="M1308.500 682.500l9 9m0-9l-9 9" stroke="#777" stroke-width="1.300"/>
</svg>
</body></html>
